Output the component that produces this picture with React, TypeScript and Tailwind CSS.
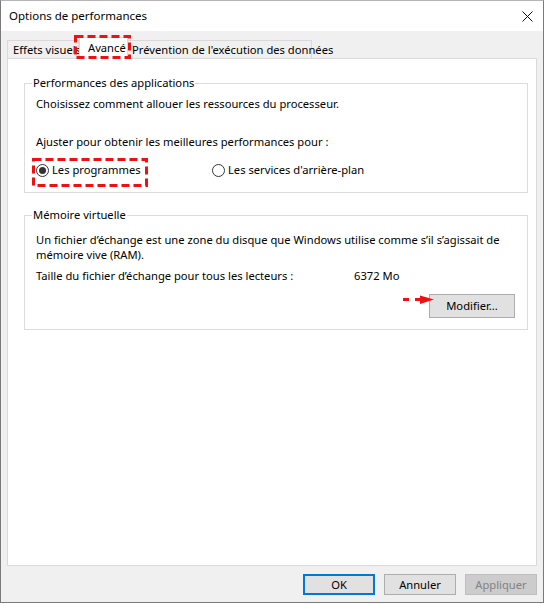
import React from "react";

const font = { fontFamily: '"Noto Sans", "Open Sans", sans-serif' };

function Radio({ checked }: { checked?: boolean }) {
  return (
    <span className="w-[13px] h-[13px] rounded-full border border-[#333] bg-white flex items-center justify-center shrink-0">
      {checked && <span className="w-[7px] h-[7px] rounded-full bg-[#333]" />}
    </span>
  );
}

function DashedBox({ className, w, h }: { className: string; w: number; h: number }) {
  // red annotation drawn on top of the dialog
  return (
    <svg className={className} width={w} height={h}>
      <rect x={1.5} y={1.5} width={w - 3} height={h - 3} fill="none" stroke="#ee1111" strokeWidth={3} strokeDasharray="8 4" />
    </svg>
  );
}

export default function App() {
  return (
    <div className="w-[545px] h-[604px] bg-white text-[11.2px] text-black" style={font}>
      <div className="relative w-[544px] h-[603px] border border-[#7a7a7a] border-t-[#b5b5b5] bg-[#f0f0f0] flex flex-col">
        {/* Title bar */}
        <div className="h-[30px] bg-white flex items-center justify-between pl-2 pr-[9px]">
          <span className="text-[11.5px] leading-4">Options de performances</span>
          <svg width="11" height="11" viewBox="0 0 11 11" className="mr-[1px]">
            <path d="M0.5 0.5 L10.5 10.5 M10.5 0.5 L0.5 10.5" stroke="#111" strokeWidth="1" />
          </svg>
        </div>

        <div className="px-[6px] pt-[6px]">
          {/* Tabs */}
          <div className="flex items-end h-[21px] whitespace-nowrap">
            <div className="h-[18px] w-[72px] border border-b-0 border-[#d9d9d9] bg-[#f0f0f0] pl-[5px] leading-[17px]">Effets visuels</div>
            <div className="h-[22px] w-[49px] -mb-px relative z-10 border border-b-0 border-[#d9d9d9] bg-white pl-[8px] leading-[19px]">Avancé</div>
            <div className="h-[18px] w-[184px] border border-b-0 border-l-0 border-[#d9d9d9] bg-[#f0f0f0] pl-[4px] leading-[17px]">Prévention de l'exécution des données</div>
          </div>

          {/* Panel */}
          <div className="h-[508px] border border-[#d9d9d9] bg-white pl-[16px]">
            <fieldset className="mt-[16px] w-[504px] border border-[#dcdcdc] pl-[11px] pb-[14px]">
              <legend className="ml-[-4px] px-[1px] leading-4">Performances des applications</legend>
              <div className="mt-[5px] leading-4">Choisissez comment allouer les ressources du processeur.</div>
              <div className="mt-[22px] leading-4">Ajuster pour obtenir les meilleures performances pour :</div>
              <div className="mt-[12px] h-4 flex items-center">
                <div className="w-[176px] flex items-center gap-[3px]">
                  <Radio checked />
                  <span>Les programmes</span>
                </div>
                <div className="flex items-center gap-[3px]">
                  <Radio />
                  <span>Les services d'arrière-plan</span>
                </div>
              </div>
            </fieldset>

            <fieldset className="mt-[14px] w-[504px] border border-[#dcdcdc] pl-[11px] pb-[11px] pr-[12px]">
              <legend className="ml-[-4px] px-[1px] leading-4">Mémoire virtuelle</legend>
              <div className="mt-[9px] leading-[15px] whitespace-nowrap">
                Un fichier d’échange est une zone du disque que Windows utilise comme s’il s’agissait de
                <br />
                mémoire vive (RAM).
              </div>
              <div className="mt-[6px] leading-4 flex">
                <span className="w-[318px]">Taille du fichier d’échange pour tous les lecteurs :</span>
                <span>6372 Mo</span>
              </div>
              <div className="mt-[10px] flex justify-end">
                <button className="relative w-[86px] h-[24px] border border-[#adadad] bg-[#e1e1e1] leading-4">
                  Modifier...
                  <svg className="absolute left-[-27px] top-[0px]" width="32" height="10" viewBox="0 0 32 10">
                    <path d="M0 4.5 H6" stroke="#ee1111" strokeWidth="3" />
                    <path d="M12 4.5 H20" stroke="#ee1111" strokeWidth="3" />
                    <path d="M17 0.5 L31 4.5 L17 9 Z" fill="#ee1111" />
                  </svg>
                </button>
              </div>
            </fieldset>
          </div>
        </div>

        {/* Bottom buttons */}
        <div className="mt-[8px] flex justify-end gap-[9px] pr-[6px]">
          <button className="w-[72px] h-[21px] border-2 border-[#0078d7] bg-[#e1e1e1] leading-4">OK</button>
          <button className="w-[72px] h-[21px] border border-[#adadad] bg-[#e1e1e1] leading-4">Annuler</button>
          <button className="w-[72px] h-[21px] border border-[#bfbfbf] bg-[#cccccc] text-[#838383] leading-4">Appliquer</button>
        </div>

        {/* Red annotations */}
        <DashedBox className="absolute left-[73px] top-[34px] z-20" w={57} h={24} />
        <DashedBox className="absolute left-[31px] top-[157px] z-20" w={116} h={29} />
      </div>
    </div>
  );
}
